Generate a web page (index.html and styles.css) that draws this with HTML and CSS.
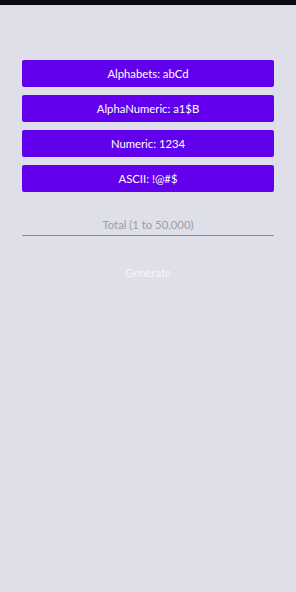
FILE: index.html
```html
<!DOCTYPE html>
<html lang="en">
<head>
  <meta charset="UTF-8" />
  <meta name="viewport" content="width=device-width, initial-scale=1.0"/>
  <title>Random Generator</title>
  <link rel="stylesheet" href="styles.css">
</head>
<body>
  <div class="status-bar"></div>

  <div class="content">
    <!-- Type buttons -->
    <div class="type-list">
      <button class="type-button">Alphabets: abCd</button>
      <button class="type-button">AlphaNumeric: a1$B</button>
      <button class="type-button">Numeric: 1234</button>
      <button class="type-button">ASCII: !@#$</button>
    </div>

    <input class="total-input" type="text" placeholder="Total (1 to 50,000)" />

    <button class="generate-button">Generate</button>
  </div>
</body>
</html>
```

FILE: styles.css
```css
* {
  margin: 0;
  padding: 0;
  box-sizing: border-box;
}

body {
  font-family: Lato, 'Noto Sans', sans-serif;
  background: #dfdfe9;
  width: 296px;
  height: 592px;
  overflow: hidden;
}

.status-bar {
  height: 5px;
  background: #0a0a10;
}

.content {
  padding: 55px 22px 0;
  display: flex;
  flex-direction: column;
  align-items: center;
}

.type-list {
  width: 100%;
  display: flex;
  flex-direction: column;
  gap: 8px;
}

.type-button {
  width: 100%;
  height: 27px;
  background: #6200ee;
  color: #fff;
  border: none;
  border-radius: 2px;
  font-family: inherit;
  font-size: 11.3px;
}

.total-input {
  width: 100%;
  margin-top: 25px;
  height: 19px;
  padding-bottom: 4px;
  background: transparent;
  border: none;
  border-bottom: 1px solid #8c8c94;
  font-family: inherit;
  font-size: 11.3px;
  text-align: center;
  color: #333;
  outline: none;
}

.total-input::placeholder {
  color: #9c9ca4;
}

.generate-button {
  margin-top: 30px;
  background: transparent;
  border: none;
  color: #f6f6fa;
  font-family: inherit;
  font-size: 11.3px;
}
```
